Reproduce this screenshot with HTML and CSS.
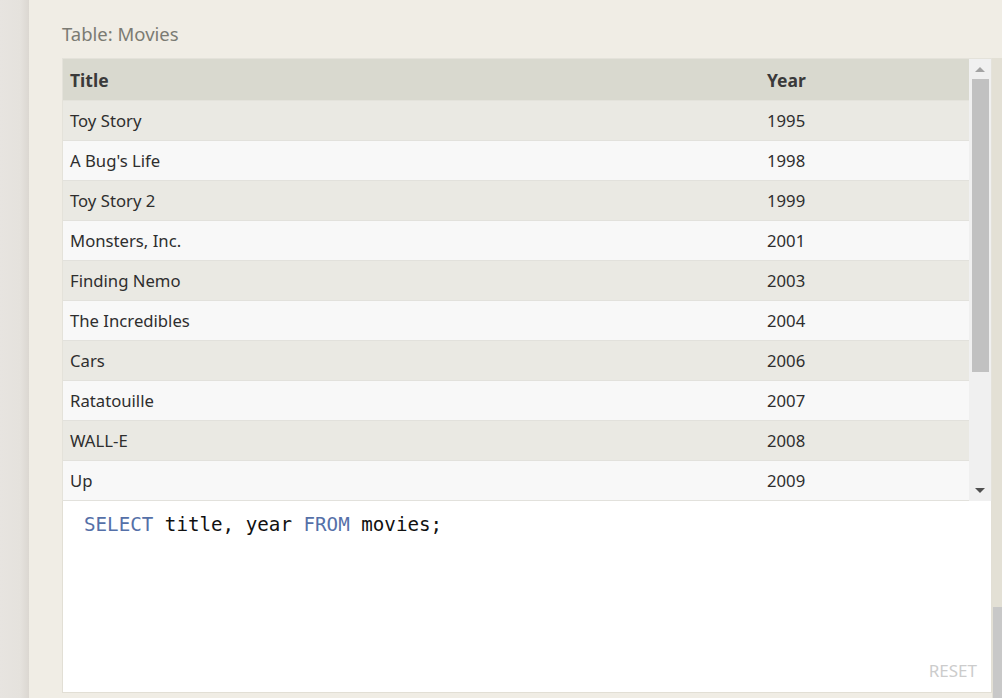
FILE: index.html
```html
<!DOCTYPE html>
<html>
<head>
<meta charset="utf-8">
<link rel="stylesheet" href="styles.css">
</head>
<body>
<div class="edge"></div>
<div class="main">
  <div class="label">Table: Movies</div>
  <div class="row">
    <div class="panel">
      <div class="table-wrap">
        <div class="table">
          <div class="tr head"><div class="c1">Title</div><div class="c2">Year</div></div>
          <div class="tr odd"><div class="c1">Toy Story</div><div class="c2">1995</div></div>
          <div class="tr even"><div class="c1">A Bug's Life</div><div class="c2">1998</div></div>
          <div class="tr odd"><div class="c1">Toy Story 2</div><div class="c2">1999</div></div>
          <div class="tr even"><div class="c1">Monsters, Inc.</div><div class="c2">2001</div></div>
          <div class="tr odd"><div class="c1">Finding Nemo</div><div class="c2">2003</div></div>
          <div class="tr even"><div class="c1">The Incredibles</div><div class="c2">2004</div></div>
          <div class="tr odd"><div class="c1">Cars</div><div class="c2">2006</div></div>
          <div class="tr even"><div class="c1">Ratatouille</div><div class="c2">2007</div></div>
          <div class="tr odd"><div class="c1">WALL-E</div><div class="c2">2008</div></div>
          <div class="tr even"><div class="c1">Up</div><div class="c2">2009</div></div>
        </div>
        <div class="sb">
          <div class="arrow up"></div>
          <div class="thumb"></div>
          <div class="arrow down"></div>
        </div>
      </div>
      <div class="editor">
        <div class="code"><span class="kw">SELECT</span> title, year <span class="kw">FROM</span> movies;</div>
        <div class="reset">RESET</div>
      </div>
    </div>
    <div class="strip"><div class="strip-thumb"></div></div>
  </div>
</div>
</body>
</html>
```
FILE: styles.css
```css
html, body {
  margin: 0;
  padding: 0;
  height: 698px;
  overflow: hidden;
}
body {
  display: flex;
  font-family: "Noto Sans", "Open Sans", sans-serif;
  background: #f0ede5;
}
.edge {
  width: 29px;
  flex: none;
  background: linear-gradient(to right, #e7e4e0 0%, #e5e2dd 70%, #dbd7d1 100%);
}
.main {
  flex: 1;
  display: flex;
  flex-direction: column;
  padding-left: 33px;
  background: #f0ede5;
}
.label {
  height: 58px;
  box-sizing: border-box;
  padding-top: 21px;
  font-size: 18.5px;
  line-height: 26px;
  color: #7b7b73;
}
.row {
  display: flex;
  flex: 1;
  align-items: stretch;
}
.panel {
  width: 930px;
  flex: none;
  display: flex;
  flex-direction: column;
}
.table-wrap {
  height: 443px;
  box-sizing: border-box;
  border: 1px solid #e4e2da;
  border-bottom: none;
  display: flex;
  background: #f8f8f8;
}
.table {
  flex: 1;
  display: flex;
  flex-direction: column;
}
.tr {
  display: flex;
  height: 40px;
  box-sizing: border-box;
  align-items: center;
  font-size: 16.7px;
  color: #2e2e2e;
  border-bottom: 1px solid #e2e1dc;
}
.tr.head {
  height: 42px;
  background: #d9d9cf;
  font-weight: bold;
  font-size: 17.5px;
  color: #3a3a3a;
  border-bottom: 1px solid #e4e3dc;
}
.tr.odd { background: #eae9e3; }
.tr.even { background: #f8f8f8; }
.c1 {
  width: 697px;
  padding-left: 7px;
}
.c2 {
  flex: 1;
}
.sb {
  width: 20px;
  flex: none;
  background: #f0f0f0;
  display: flex;
  flex-direction: column;
  align-items: center;
  padding: 0 1px;
}
.arrow {
  width: 0;
  height: 0;
  border-left: 5px solid transparent;
  border-right: 5px solid transparent;
}
.arrow.up {
  margin-top: 8px;
  border-bottom: 5px solid #a3a3a3;
  margin-bottom: 7px;
}
.thumb {
  width: 17px;
  height: 293px;
  background: #c1c1c1;
}
.arrow.down {
  margin-top: auto;
  margin-bottom: 8px;
  border-top: 5px solid #505050;
}
.editor {
  height: 192px;
  box-sizing: border-box;
  background: #fff;
  border: 1px solid #e2dfd5;
  border-top: none;
  display: flex;
  flex-direction: column;
  padding: 12px 14px 11px 21px;
}
.code {
  font-family: "DejaVu Sans Mono", "Liberation Mono", monospace;
  font-size: 19.2px;
  line-height: 24px;
  color: #111;
}
.kw { color: #5570a8; }
.reset {
  margin-top: auto;
  align-self: flex-end;
  font-size: 17px;
  color: #cccccc;
  line-height: 20px;
}
.strip {
  flex: 1;
  background: #e3e0d5;
  display: flex;
  flex-direction: column;
  justify-content: flex-end;
  align-items: flex-end;
}
.strip-thumb {
  width: 9px;
  height: 91px;
  background: #c8c8c8;
}
```
